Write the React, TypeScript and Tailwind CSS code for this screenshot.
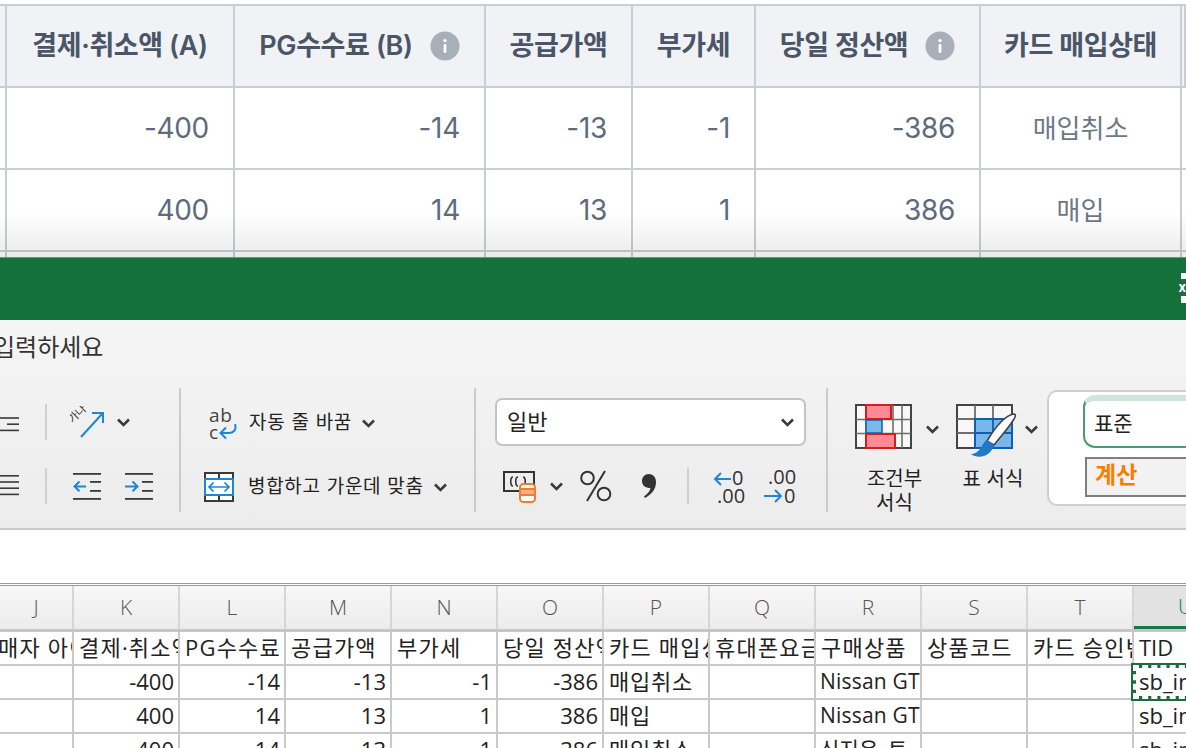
import React from 'react';

const headCell = 'flex h-full items-center justify-center gap-[17px] border-r-2 border-b-2 border-[#c9ced6] bg-[#f0f2f6] text-[27px] font-semibold tracking-[-0.4px] text-[#4a5567]';
const numCell = 'flex items-center justify-end border-r-2 border-b-2 border-[#c9ced6] pr-6 text-[28px] tracking-[-0.3px] text-[#5f6b7c]';
const statusCell = 'flex items-center justify-center border-r-2 border-b-2 border-[#c9ced6] text-[26px] text-[#6d7786]';
const edgeCell = 'border-r-2 border-b-2 border-[#c9ced6]';

const topRows = [
  ['-400', '-14', '-13', '-1', '-386', '매입취소'],
  ['400', '14', '13', '1', '386', '매입'],
];

const sheetCols = ['J', 'K', 'L', 'M', 'N', 'O', 'P', 'Q', 'R', 'S', 'T'];
const sheetRows = [
  ['', '-400', '-14', '-13', '-1', '-386', '매입취소', '', 'Nissan GT', '', ''],
  ['', '400', '14', '13', '1', '386', '매입', '', 'Nissan GT', '', ''],
  ['', '400', '14', '13', '1', '386', '매입취소', '', '신지은_토', '', ''],
];
const sheetHead = ['결제·취소액', 'PG수수료', '공급가액', '부가세', '당일 정산액', '카드 매입상태', '휴대폰요금', '구매상품', '상품코드', '카드 승인번호'];

function Info() {
  return (
    <svg width="30" height="30" viewBox="0 0 30 30" className="shrink-0">
      <circle cx="15" cy="15" r="14.5" fill="#a8afb9" />
      <rect x="13.6" y="13" width="2.8" height="9" rx="1" fill="#fff" />
      <circle cx="15" cy="9.6" r="1.7" fill="#fff" />
    </svg>
  );
}

function Chevron({ className = '' }: { className?: string }) {
  return (
    <svg width="13" height="9" viewBox="0 0 13 9" className={'shrink-0 ' + className}>
      <path d="M1 1.5 6.500 7 12 1.500" fill="none" stroke="#3a3a3a" strokeWidth="2.6" />
    </svg>
  );
}

function Lines({ widths }: { widths: number[] }) {
  return (
    <svg width="19" height="34" viewBox="0 0 19 34" className="shrink-0">
      {widths.map((w, i) =>
        w > 0 ? <rect key={i} x={19 - w} y={6 + i * 6.2} width={w} height="1.6" fill="#3a3a3a" /> : null,
      )}
    </svg>
  );
}

function Indent({ dir }: { dir: 'left' | 'right' }) {
  return (
    <svg width="28" height="27" viewBox="0 0 28 27" className="shrink-0">
      <rect x="0" y="0" width="28" height="1.8" fill="#3a3a3a" />
      <rect x="0" y="25" width="28" height="1.8" fill="#3a3a3a" />
      <rect x="17" y="8" width="11" height="1.8" fill="#3a3a3a" />
      <rect x="17" y="17" width="11" height="1.8" fill="#3a3a3a" />
      {dir === 'left' ? (
        <path d="M13 13.4H1.5M6.5 8.5 1.5 13.4l5 4.9" fill="none" stroke="#1f86d1" strokeWidth="2" />
      ) : (
        <path d="M0 13.4h12M7.5 8.5l5 4.9-5 4.9" fill="none" stroke="#1f86d1" strokeWidth="2" />
      )}
    </svg>
  );
}

function Orientation() {
  return (
    <svg width="34" height="32" viewBox="0 0 34 32" className="shrink-0">
      <text x="1" y="16" fontSize="11" fill="#333" transform="rotate(-45 4 15)" fontFamily="'Noto Sans CJK KR'">가나</text>
      <path d="M11 31 32 8M22 7h11v10" fill="none" stroke="#1f86d1" strokeWidth="2" />
    </svg>
  );
}

function WrapIcon() {
  return (
    <svg width="30" height="33" viewBox="0 0 30 33" className="shrink-0">
      <text x="0" y="15" fontSize="19" fill="#444" fontFamily="'Open Sans'">ab</text>
      <text x="0" y="32" fontSize="19" fill="#444" fontFamily="'Open Sans'">c</text>
      <path d="M26 17c2 6-2 9-6 9H12M17 20.5 11.5 26l5.5 5.500" fill="none" stroke="#1f86d1" strokeWidth="2" />
    </svg>
  );
}

function MergeIcon() {
  return (
    <svg width="30" height="30" viewBox="0 0 30 30" className="shrink-0">
      <rect x="1" y="1" width="28" height="28" fill="#fff" stroke="#3a3a3a" strokeWidth="2" />
      <path d="M15 1v6M15 23v6" stroke="#3a3a3a" strokeWidth="2" />
      <rect x="1" y="7" width="28" height="16" fill="#fff" stroke="#1f86d1" strokeWidth="2" />
      <path d="M5 15h20M9.500 10.500 5 15l4.500 4.500M20.500 10.500 25 15l-4.500 4.500" fill="none" stroke="#1f86d1" strokeWidth="1.7" />
    </svg>
  );
}

function CurrencyIcon() {
  return (
    <svg width="33" height="34" viewBox="0 0 33 34" className="shrink-0">
      <rect x="1" y="3" width="30" height="19" fill="none" stroke="#333" strokeWidth="2" />
      <path d="M10 8c-3 0-3 9 0 9M15 8c-3 0-3 9 0 9M20 8c3 0 3 9 0 9" fill="none" stroke="#333" strokeWidth="1.6" />
      <rect x="17" y="15" width="15" height="18" rx="3.500" fill="#fff" stroke="#ed7d31" strokeWidth="2" />
      <path d="M17 20h15M17 26h15" stroke="#ed7d31" strokeWidth="2" />
      <rect x="18" y="21" width="13" height="4" fill="#f7b27f" />
    </svg>
  );
}

function PercentIcon() {
  return (
    <svg width="32" height="36" viewBox="0 0 32 36" className="shrink-0">
      <circle cx="7.500" cy="10" r="6.300" fill="none" stroke="#333" strokeWidth="2" />
      <circle cx="24" cy="26" r="6.300" fill="none" stroke="#333" strokeWidth="2" />
      <path d="M25 3 7 33" stroke="#333" strokeWidth="2" />
    </svg>
  );
}

function CommaIcon() {
  return (
    <svg width="16" height="26" viewBox="0 0 16 26" className="shrink-0">
      <path d="M7.500 1c4.500 0 7.500 3 7.500 8 0 7-4 12-11 16l-1-1.500c4-3 6-5.500 6.500-8.500C4.500 15 1 12.500 1 8c0-4 3-7 6.500-7z" fill="#333" />
    </svg>
  );
}

function DecimalIcon({ kind }: { kind: 'more' | 'less' }) {
  return (
    <svg width="34" height="34" viewBox="0 0 34 34" className="shrink-0">
      {kind === 'more' ? (
        <>
          <text x="19" y="16" fontSize="20" fill="#333" fontFamily="'Open Sans'">0</text>
          <text x="4" y="34" fontSize="20" fill="#333" fontFamily="'Open Sans'">.00</text>
          <path d="M18 10H2M8 4 2 10l6 6" fill="none" stroke="#1f86d1" strokeWidth="2" />
        </>
      ) : (
        <>
          <text x="4" y="15" fontSize="20" fill="#333" fontFamily="'Open Sans'">.00</text>
          <text x="20" y="34" fontSize="20" fill="#333" fontFamily="'Open Sans'">0</text>
          <path d="M0 27h17M11 21l6 6-6 6" fill="none" stroke="#1f86d1" strokeWidth="2" />
        </>
      )}
    </svg>
  );
}

function CondIcon() {
  return (
    <svg width="57" height="45" viewBox="0 0 57 45" className="shrink-0">
      <rect x="1" y="1" width="55" height="43" fill="#f8f8f8" stroke="#444" strokeWidth="2" />
      <path d="M1 15.500h55M1 29.500h55M38 1v43M47 1v43M11 1v43" stroke="#6e6e6e" strokeWidth="1.6" />
      <rect x="11" y="1" width="25" height="14" fill="#ff8a93" stroke="#cf1f1f" strokeWidth="2" />
      <rect x="11" y="16" width="16" height="13" fill="#7ab8ea" stroke="#0f5fb0" strokeWidth="1.5" />
      <rect x="11" y="30" width="29" height="14" fill="#ff8a93" stroke="#cf1f1f" strokeWidth="2" />
    </svg>
  );
}

function TableBrushIcon() {
  return (
    <svg width="62" height="56" viewBox="0 0 62 56" className="shrink-0">
      <rect x="1" y="1" width="55" height="43" fill="#f8f8f8" stroke="#444" strokeWidth="2" />
      <path d="M19 1v43M37 1v14M1 15h18M1 29h18" stroke="#6e6e6e" strokeWidth="1.8" />
      <rect x="19" y="15" width="37" height="29" fill="#79b6ea" stroke="#0f5fb0" strokeWidth="2" />
      <path d="M37 15v29M19 29h37" stroke="#0f5fb0" strokeWidth="1.8" />
      <path d="M31 37C40 22 50 11 58 10c2 0 1.500 3 0 5C52 25 44 33 38 41z" fill="#fff" stroke="#444" strokeWidth="1.600" />
      <path d="M31 36c-4 2-4 6-7 9-2 3-6 5-9 5 6 5 19 4 23-9z" fill="#1f78c8" />
    </svg>
  );
}

function App() {
  return (
    <div className="relative h-[748px] w-[1186px] overflow-hidden bg-white font-['Inter','Noto_Sans_CJK_KR',sans-serif]">
      {/* web table */}
      <div className="relative h-[257px] pt-1">
        <div className="grid grid-cols-[7px_228px_251px_147px_123px_225px_201px_1fr] grid-rows-[82px_82px_82px_5px] border-t-2 border-[#c9ced6]">
          <div className={headCell} />
          <div className={headCell}>결제·취소액 (A)</div>
          <div className={headCell}>
            PG수수료 (B)
            <Info />
          </div>
          <div className={headCell}>공급가액</div>
          <div className={headCell}>부가세</div>
          <div className={headCell}>
            당일 정산액
            <Info />
          </div>
          <div className={headCell}>카드 매입상태</div>
          <div className={headCell + ' border-r-0'} />

          {topRows.map((r, i) => (
            <React.Fragment key={i}>
              <div className={edgeCell} />
              {r.slice(0, 5).map((v, j) => (
                <div key={j} className={numCell}>{v}</div>
              ))}
              <div className={statusCell}>{r[5]}</div>
              <div className="border-b-2 border-[#c9ced6]" />
            </React.Fragment>
          ))}
          {[0, 1, 2, 3, 4, 5, 6].map((k) => (
            <div key={k} className="border-r-2 border-[#c9ced6]" />
          ))}
          <div />
        </div>
        <div className="pointer-events-none absolute inset-x-0 bottom-0 h-[45px] bg-gradient-to-b from-transparent to-[#00000014]" />
      </div>

      {/* title bar */}
      <div className="relative h-[63px] border-t border-[#5f9b78] bg-[#137139]">
        <div className="absolute top-[15px] left-[1181px] h-[7px] w-[5px] bg-white" />
        <div className="absolute top-[22px] left-[1183px] h-4 w-[3px] bg-white" />
        <div className="absolute top-[38px] left-[1181px] h-[7px] w-[5px] bg-white" />
        <div className="absolute top-[21px] left-[1177px] flex h-[17px] w-[9px] items-center justify-end bg-[#1d6b3f] text-[13px] font-bold text-white">x</div>
      </div>

      {/* ribbon */}
      <div className="h-[210px] border-b-2 border-[#c8c8c8] bg-gradient-to-b from-[#f5f5f5] to-[#ececec] text-[#222]">
        <div className="-ml-[7px] flex h-[68px] items-center pb-[12px] text-[24px] leading-none text-[#333]">입력하세요</div>
        <div className="flex h-[124px]">
          <div className="flex w-[181px] shrink-0 flex-col justify-center gap-7 border-r-2 border-[#cbcbcb] pt-[8px]">
            <div className="flex h-9 items-center">
              <Lines widths={[0, 19, 12, 19]} />
              <div className="ml-[26px] h-9 w-0.5 bg-[#d0d0d0]" />
              <div className="ml-[23px]"><Orientation /></div>
              <Chevron className="ml-[13px]" />
            </div>
            <div className="flex h-9 items-center">
              <Lines widths={[19, 19, 19, 19]} />
              <div className="ml-[26px] h-9 w-0.5 bg-[#d0d0d0]" />
              <div className="ml-[26px]"><Indent dir="left" /></div>
              <div className="ml-6"><Indent dir="right" /></div>
            </div>
          </div>

          <div className="flex w-[295px] shrink-0 flex-col justify-center gap-7 border-r-2 border-[#cbcbcb] pt-[10px] text-[19px] tracking-[0.7px]">
            <div className="flex h-9 items-center">
              <div className="ml-[28px]"><WrapIcon /></div>
              <span className="ml-[10px]">자동 줄 바꿈</span>
              <Chevron className="ml-[10px]" />
            </div>
            <div className="flex h-9 items-center">
              <div className="ml-[23px]"><MergeIcon /></div>
              <span className="ml-[14px]">병합하고 가운데 맞춤</span>
              <Chevron className="ml-[10px]" />
            </div>
          </div>

          <div className="flex w-[352px] shrink-0 flex-col gap-[22px] border-r-2 border-[#cbcbcb] pt-[10px] pl-[19px]">
            <div className="flex h-12 w-[311px] items-center justify-between rounded-[7px] border-2 border-[#c4c4c4] bg-white px-[10px] text-[22px]">
              일반
              <Chevron />
            </div>
            <div className="flex h-9 items-center">
              <div className="ml-2"><CurrencyIcon /></div>
              <Chevron className="ml-[14px]" />
              <div className="ml-[17px]"><PercentIcon /></div>
              <div className="ml-[29px]"><CommaIcon /></div>
              <div className="ml-[30px] h-9 w-0.5 bg-[#d0d0d0]" />
              <div className="ml-[24px]"><DecimalIcon kind="more" /></div>
              <div className="ml-[17px]"><DecimalIcon kind="less" /></div>
            </div>
          </div>

          <div className="flex pt-[16px] pl-[27px]">
            <div className="flex w-[100px] shrink-0 gap-[14px]">
              <div className="flex w-[57px] flex-col items-center">
                <CondIcon />
                <div className="mt-[18px] ml-[22px] w-[70px] shrink-0 text-center text-[20px] leading-[24px]">조건부<br />서식</div>
              </div>
              <Chevron className="mt-[21px]" />
            </div>
            <div className="flex w-[92px] shrink-0">
              <div className="flex w-[64px] flex-col items-center">
                <div className="h-[63px]"><TableBrushIcon /></div>
                <div className="ml-[12px] w-[80px] shrink-0 text-center text-[20px] leading-[24px]">표 서식</div>
              </div>
              <Chevron className="mt-[21px] ml-[6px]" />
            </div>
            <div className="-mt-[14px] flex h-[116px] w-[160px] flex-col rounded-l-[10px] border-2 border-r-0 border-[#cfcfcf] bg-white pt-[3px] pl-[34px]">
              <div className="flex h-[53px] items-center rounded-l-[12px] border-2 border-r-0 border-t-[6px] border-[#4f9a70] border-t-[#cfe5d8] pl-[9px] text-[21px] leading-none">표준</div>
              <div className="mt-[9px] ml-[2px] flex h-[40px] items-center border-2 border-r-0 border-[#7f7f7f] bg-[#f2f2f2] pb-[3px] pl-[8px] text-[23px] font-bold text-[#fa7d00]">계산</div>
            </div>
          </div>
        </div>
      </div>

      {/* formula bar */}
      <div className="h-[56px] border-b-[3px] border-double border-[#9a9a9a] bg-white" />

      {/* sheet */}
      <div className="font-['Open_Sans','Noto_Sans_CJK_KR',sans-serif] text-[22px] leading-none text-[#222]">
        <div className="grid h-[46px] grid-cols-[74px_repeat(10,106px)_1fr] border-b-[3px] border-[#c6c6c6] bg-gradient-to-b from-[#f7f7f7] to-[#ececec] text-[#555]">
          {sheetCols.map((c) => (
            <div key={c} className="flex items-center justify-center border-r-2 border-[#d6d6d6] text-[21px] font-light">{c}</div>
          ))}
          <div className="flex items-center justify-start border-b-[3px] border-[#107c41] bg-[#e2e2e2] pl-[44px] text-[21px] font-light text-[#107c41]">U</div>
        </div>
        <div className="grid grid-cols-[74px_repeat(10,106px)_1fr] grid-rows-[34px_34px_34px_34px]">
          <div className="flex items-center overflow-hidden border-r-2 border-b-2 border-[#c9c9c9] pb-[2px] tracking-[1.2px] whitespace-nowrap">
            <span className="-ml-[2px]">매자 아이</span>
          </div>
          {sheetHead.map((h, i) => (
            <div key={i} className="flex items-center overflow-hidden border-r-2 border-b-2 border-[#c9c9c9] pb-[2px] pl-[5px] tracking-[1.2px] whitespace-nowrap">{h}</div>
          ))}
          <div className="flex items-center border-b-2 border-[#c9c9c9] pb-[2px] pl-[5px]">TID</div>

          {sheetRows.map((r, i) => (
            <React.Fragment key={i}>
              {r.map((v, j) => {
                const isNum = j >= 1 && j <= 5;
                return (
                  <div key={j} className={'flex items-center overflow-hidden border-r-2 border-b-2 border-[#c9c9c9] pr-[4px] pb-[2px] whitespace-nowrap ' + (isNum ? 'justify-end pl-[5px]' : j === 8 ? 'justify-start pl-[4px] text-[21px] tracking-[0.2px]' : 'justify-start pl-[5px] tracking-[0.8px]')}>{v}</div>
                );
              })}
              <div className="relative flex items-center border-b-2 border-[#c9c9c9] pb-[2px] pl-[5px]">
                sb_in
                {i === 0 && (
                  <div className="absolute -top-[3px] -right-1 -bottom-[3px] -left-[3px] border-[5px] border-[#1d6b3f]">
                    <div className="absolute -inset-[3px] border-[3px] border-dashed border-white" />
                  </div>
                )}
              </div>
            </React.Fragment>
          ))}
        </div>
      </div>
    </div>
  );
}

export default App;
